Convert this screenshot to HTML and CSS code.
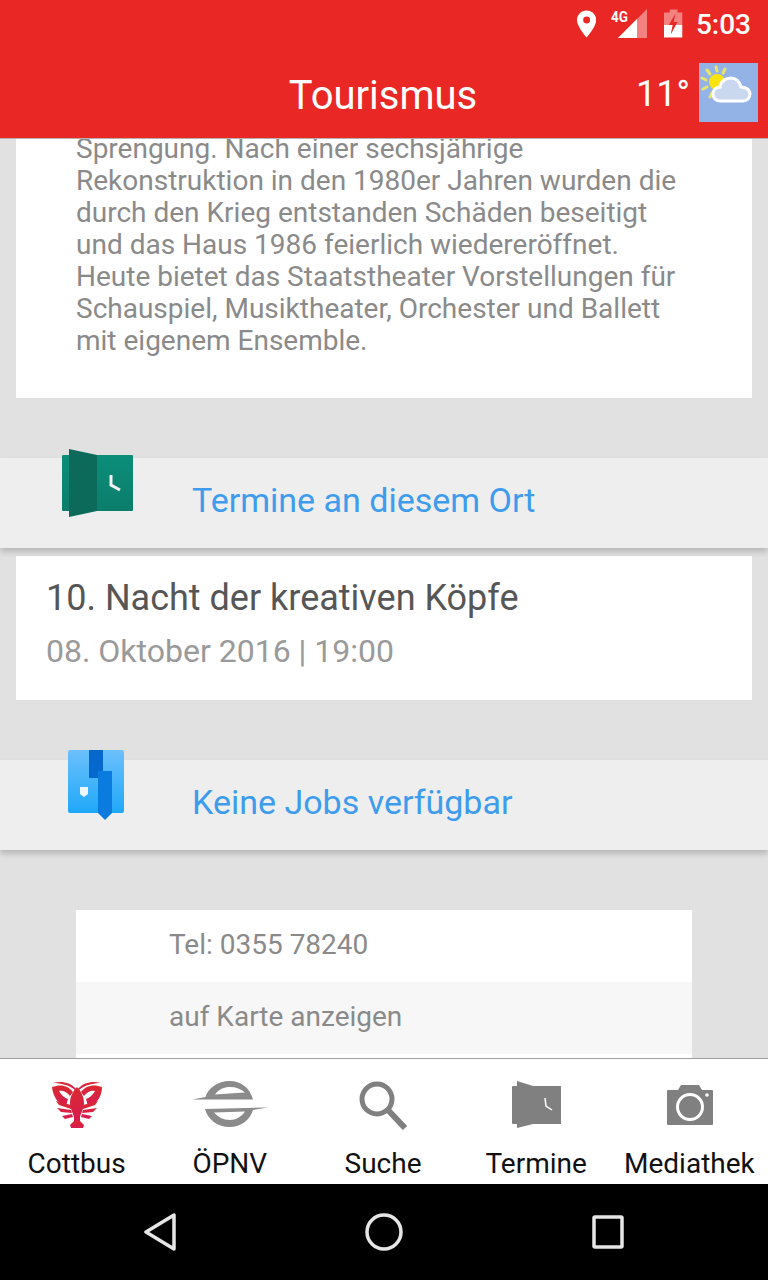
FILE: index.html
```html
<!DOCTYPE html>
<html lang="de">
<head>
  <meta charset="UTF-8">
  <meta name="viewport" content="width=device-width, initial-scale=1.0">
  <title>Tourismus</title>
  <link rel="stylesheet" href="styles.css">
</head>
<body>
  <header class="app-header">
    <div class="status-bar">
      <svg class="st-pin" width="20" height="28" viewBox="0 0 20 28"><path fill="#fff" fill-rule="evenodd" d="M10 0C4.500 0 0 4.400 0 9.900 0 17 10 28 10 28s10-11 10-18.100C20 4.400 15.500 0 10 0zm0 13.500a3.600 3.600 0 1 1 0-7.200 3.600 3.600 0 0 1 0 7.200z"/></svg>
      <div class="st-signal">
        <span class="st-4g">4G</span>
        <svg width="30" height="30" viewBox="0 0 30 30"><path fill="#fff" fill-opacity=".42" d="M29 0v29H0z"/><path fill="#fff" d="M19 10v19H0z"/></svg>
      </div>
      <svg class="st-battery" width="20" height="30" viewBox="0 0 20 30"><path fill="#fff" fill-opacity=".42" d="M6 0h8v3h5v13H0V3h6z"/><path fill="#fff" d="M0 16h19v13H0z"/><path fill="#e92725" d="M12 4 5 16h4L7 26l7-13h-4z"/></svg>
      <span class="st-time">5:03</span>
    </div>
    <div class="toolbar">
      <h1 class="toolbar-title">Tourismus</h1>
      <span class="temp">11°</span>
      <svg class="weather" width="59" height="59" viewBox="0 0 59 59">
        <rect width="59" height="59" fill="#93b3e6"/>
        <g stroke="#e8e56a" stroke-width="3" stroke-linecap="round">
          <path d="M17 4l1 4M8 7l3 4M3 15l4 2M4 26l4-2M11 34l2-4M26 6l-2 4"/>
        </g>
        <circle cx="18" cy="19" r="8" fill="#fbe30f"/>
        <path fill="#c9d8ee" stroke="#fff" stroke-width="3" d="M21 38C16 38 14 34 14 31 14 27 17 24 21 24 21.500 18 27 15 32 15 37 15 41 19 42 24 47 24 51 27 51 31 51 35 48 38 44 38z"/>
      </svg>
    </div>
  </header>

  <main class="content">
    <section class="card text-card">
      <p>Sprengung. Nach einer sechsjährige Rekonstruktion in den 1980er Jahren wurden die durch den Krieg entstanden Schäden beseitigt und das Haus 1986 feierlich wiedereröffnet. Heute bietet das Staatstheater Vorstellungen für Schauspiel, Musiktheater, Orchester und Ballett mit eigenem Ensemble.</p>
    </section>

    <div class="section-bar">
      <svg class="section-icon" width="72" height="68" viewBox="0 0 72 68">
        <defs>
          <linearGradient id="tealBack" x1="0" y1="0" x2="0" y2="1">
            <stop offset="0" stop-color="#0b8e7a"/>
            <stop offset="1" stop-color="#0b7d6b"/>
          </linearGradient>
          <linearGradient id="blueBack" x1="0" y1="0" x2="0" y2="1">
            <stop offset="0" stop-color="#6cc0fb"/>
            <stop offset="1" stop-color="#1fa8f9"/>
          </linearGradient>
        </defs>
        <rect y="6" width="71" height="56" rx="1" fill="url(#tealBack)"/>
        <path d="M7 0l28 6v56L7 68z" fill="#0b6a5a"/>
        <path d="M49 26v10l9 5" fill="none" stroke="#f1f4f2" stroke-width="3"/>
      </svg>
      <span class="section-title">Termine an diesem Ort</span>
    </div>
    <section class="card event-card">
      <div class="event-title">10. Nacht der kreativen Köpfe</div>
      <div class="event-date">08. Oktober 2016 | 19:00</div>
    </section>

    <div class="section-bar section-bar-jobs">
      <svg class="section-icon jobs-icon" width="58" height="70" viewBox="0 0 58 70">
        <rect x="1" width="56" height="63" rx="2" fill="url(#blueBack)"/>
        <path d="M22 0h14v28H22z" fill="#0668cc"/>
        <path d="M31 21h14v42l-7 7-7-7z" fill="#0a7ce0"/>
        <path d="M13 37h8v7l-4 3-4-3z" fill="#eef6fd"/>
      </svg>
      <span class="section-title">Keine Jobs verfügbar</span>
    </div>

    <section class="contact">
      <div class="contact-row">Tel: 0355 78240</div>
      <div class="contact-row contact-row-alt">auf Karte anzeigen</div>
    </section>
  </main>

  <nav class="tab-bar">
    <a class="tab">
      <svg class="tab-icon" width="52" height="50" viewBox="0 0 52 50">
        <defs>
          <linearGradient id="lobster" x1="0" y1="0" x2="0" y2="1">
            <stop offset="0" stop-color="#d92a2e"/>
            <stop offset="1" stop-color="#d81b52"/>
          </linearGradient>
        </defs>
        <g fill="url(#lobster)">
          <path d="M2 3c8-2 17-1 23 6l-1 1C18 5 10 3 2 3zM50 3c-8-2-17-1-23 6l1 1c6-5 14-7 22-7z"/>
          <path d="M1 7c8-3 16-2 21 5l-3 4c-3-4-7-6-11-5 2 4 6 7 9 8l-2 7C8 25 2 17 1 7zM51 7c-8-3-16-2-21 5l3 4c3-4 7-6 11-5-2 4-6 7-9 8l2 7c8-1 14-9 14-19z"/>
          <path d="M26 7c4 4 7 10 7 16 0 5-3 10-4 14v5h-6v-5c-1-4-4-9-4-14 0-6 3-12 7-16z"/>
          <path d="M20 25L5 21l3 4 12 4zM32 25l15-4-3 4-12 4zM20 30L6 28l4 4 11 1zM32 30l14-2-4 4-11 1zM21 34l-10 2 3 3 8-2zM31 34l10 2-3 3-8-2z"/>
          <path d="M23 41h6l4 4-1 3h-12l-1-3z"/>
        </g>
      </svg>
      <span class="tab-label">Cottbus</span>
    </a>
    <a class="tab">
      <svg class="tab-icon" width="76" height="48" viewBox="0 0 76 48">
        <path fill="#8b8b8b" fill-rule="evenodd" d="M0 19.500L13.500 17C16 8 26 1 37.500 1 49 1 58 8 61 19.500zM23 14.500L53 12.500C49 9 44 7 38 7 32 7 27 9 23 14.500z"/>
        <path fill="#8b8b8b" fill-rule="evenodd" d="M13 29L76 27.500 61 30C58 40 49 47 37.500 47 26 47 16 40 13 29zM22 32.500C26 37 31 40 38 40 44 40 49 37 53 31.500z"/>
      </svg>
      <span class="tab-label">ÖPNV</span>
    </a>
    <a class="tab">
      <svg class="tab-icon" width="50" height="50" viewBox="0 0 50 50">
        <circle cx="19" cy="19" r="15" fill="none" stroke="#808080" stroke-width="5"/>
        <path d="M30 30l17 18" stroke="#808080" stroke-width="6"/>
      </svg>
      <span class="tab-label">Suche</span>
    </a>
    <a class="tab">
      <svg class="tab-icon" width="52" height="48" viewBox="-2 0 52 48">
        <path fill="#808080" d="M5 1l16 5h28v38H21L5 48v-4H1a1 1 0 0 1-1-1V7a1 1 0 0 1 1-1h4z"/>
        <path d="M33 18l1 8 6 4" fill="none" stroke="#fff" stroke-width="1.500"/>
      </svg>
      <span class="tab-label">Termine</span>
    </a>
    <a class="tab">
      <svg class="tab-icon" width="48" height="46" viewBox="-2 0 48 46">
        <path fill="#808080" d="M14 5h18l3 5h10a1 1 0 0 1 1 1v33a1 1 0 0 1-1 1H1a1 1 0 0 1-1-1V11a1 1 0 0 1 1-1h10z"/>
        <circle cx="23" cy="27" r="12.500" fill="none" stroke="#fff" stroke-width="3"/>
        <circle cx="40" cy="15" r="1.800" fill="#fff"/>
      </svg>
      <span class="tab-label">Mediathek</span>
    </a>
  </nav>

  <footer class="nav-bar">
    <svg width="32" height="38" viewBox="0 0 32 38"><path d="M30 2v34L2 19z" fill="none" stroke="#e6e6e6" stroke-width="3.500" stroke-linejoin="round"/></svg>
    <svg width="38" height="38" viewBox="0 0 38 38"><circle cx="19" cy="19" r="17" fill="none" stroke="#e6e6e6" stroke-width="3.500"/></svg>
    <svg width="32" height="34" viewBox="0 0 32 34"><rect x="2" y="2" width="28" height="30" rx="1" fill="none" stroke="#e6e6e6" stroke-width="3.500"/></svg>
  </footer>
</body>
</html>
```

FILE: styles.css
```css
* {
  box-sizing: border-box;
}
html, body {
  height: 100%;
}
body {
  margin: 0;
  width: 768px;
  height: 1280px;
  display: flex;
  flex-direction: column;
  overflow: hidden;
  font-family: Roboto, sans-serif;
  background-color: #e1e1e1;
}
.app-header {
  position: relative;
  z-index: 2;
  height: 139px;
  flex: none;
  background-color: #e92725;
  border-bottom: 1px solid #b8b0ae;
}
.status-bar {
  height: 48px;
  display: flex;
  align-items: center;
  padding: 0 17px 0 577px;
}
.st-signal {
  position: relative;
  margin-left: 10px;
  width: 43px;
  height: 30px;
  display: flex;
  justify-content: flex-end;
}
.st-4g {
  position: absolute;
  left: 5px;
  top: -1px;
  font-size: 15px;
  font-weight: 700;
  color: #fff;
  transform: scaleX(.9);
  transform-origin: left top;
}
.st-battery {
  margin-left: 16px;
}
.st-time {
  margin-left: 13px;
  font-size: 28px;
  font-weight: 500;
  color: #fff;
}
.toolbar {
  height: 90px;
  display: flex;
  align-items: center;
  position: relative;
  padding-right: 10px;
  justify-content: flex-end;
}
.toolbar-title {
  position: absolute;
  left: 0;
  right: 2px;
  top: 24px;
  margin: 0;
  text-align: center;
  font-size: 40px;
  font-weight: 400;
  color: #fff;
}
.temp {
  font-size: 36px;
  color: #fff;
  margin-right: 9px;
  padding-top: 2px;
}
.weather {
  margin-top: -1px;
}
.content {
  flex: 1;
  min-height: 0;
  overflow: hidden;
}
.card {
  margin: 0 16px;
  background: #fff;
}
.text-card {
  height: 259px;
  padding: 0 60px;
  overflow: hidden;
}
.text-card p {
  margin: -6px 0 0;
  font-size: 28px;
  line-height: 32px;
  color: #8a8a8a;
}
.section-bar {
  position: relative;
  height: 90px;
  margin-top: 60px;
  padding: 22px 0 0 192px;
  background: #eeeeee;
  box-shadow: 0 4px 6px rgba(0, 0, 0, 0.18);
}
.section-icon {
  position: absolute;
  left: 62px;
  top: -9px;
}
.jobs-icon {
  left: 67px;
  top: -10px;
}
.section-title {
  font-size: 34px;
  line-height: 40px;
  color: #3f9cec;
}
.event-card {
  height: 144px;
  margin-top: 8px;
  padding: 18px 30px 0;
}
.event-title {
  font-size: 36px;
  line-height: 48px;
  color: #565656;
}
.event-date {
  margin-top: 9px;
  font-size: 32px;
  line-height: 40px;
  color: #9a9a9a;
}
.contact {
  height: 150px;
  margin: 60px 76px 0;
  background: #fff;
}
.contact-row {
  height: 72px;
  padding-left: 93px;
  font-size: 28px;
  line-height: 69px;
  color: #8a8a8a;
  background: #fff;
}
.contact-row-alt {
  background: #f7f7f7;
}
.tab-bar {
  flex: none;
  height: 126px;
  display: flex;
  padding-right: 2px;
  background: #fff;
  border-top: 1px solid #9e9e9e;
}
.tab {
  position: relative;
  flex: 1;
  text-align: center;
  color: #111;
}
.tab-icon {
  position: absolute;
  top: 21px;
  left: 50%;
  transform: translateX(-50%);
}
.tab-label {
  position: absolute;
  left: -10px;
  right: -10px;
  top: 88px;
  font-size: 28px;
  line-height: 34px;
  white-space: nowrap;
}
.nav-bar {
  flex: none;
  height: 96px;
  background: #000;
  display: flex;
  align-items: center;
  padding: 0 144px;
  justify-content: space-between;
}
```
